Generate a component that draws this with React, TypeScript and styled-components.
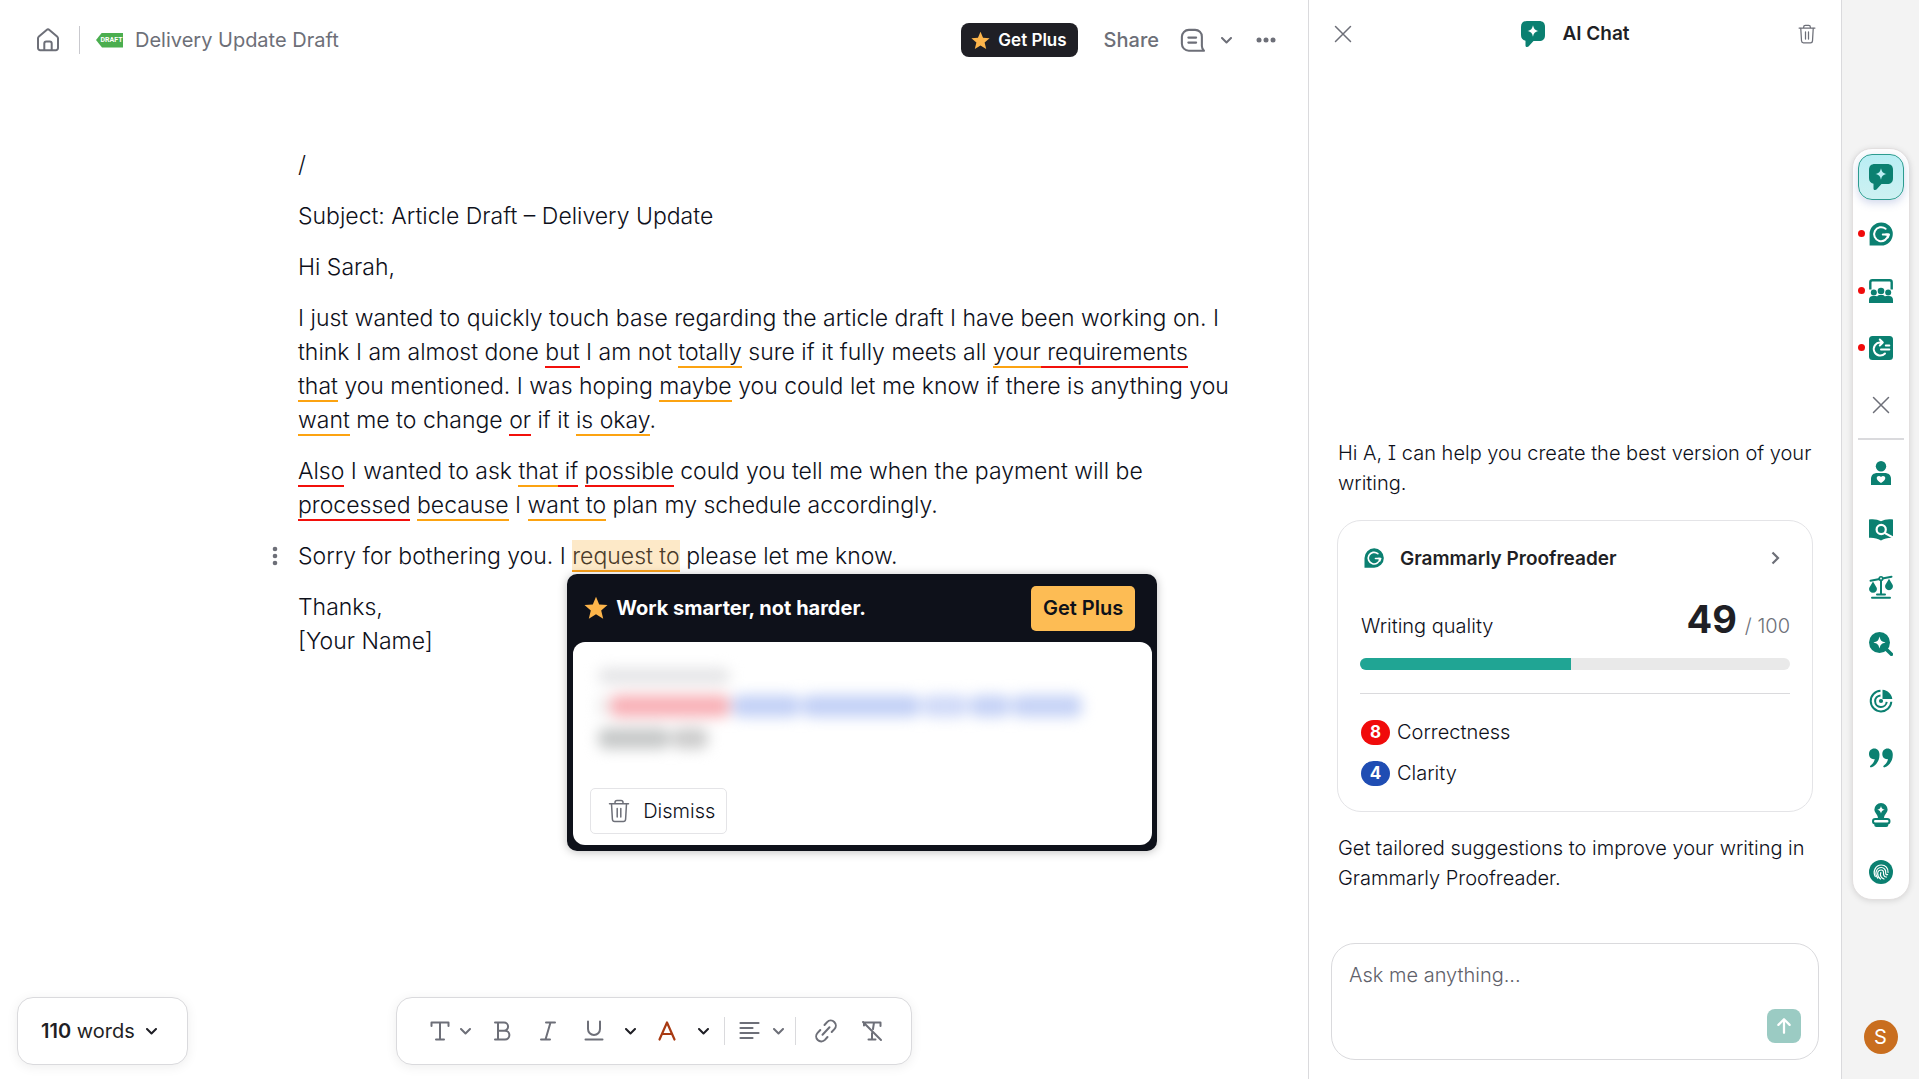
import React from "react";
import styled, { createGlobalStyle, css } from "styled-components";

const teal = "#0b8071";
const ink = "#1f1f25";
const textInk = "#0e101a";
const muted = "#6d6f78";
const line = "#dadadd";

const GlobalStyle = createGlobalStyle`
  *, *::before, *::after { box-sizing: border-box; }
  body { margin: 0; background: #fff; }
  body, button, textarea, input { font-family: Inter, "Liberation Sans", sans-serif; }
  button { border: 0; padding: 0; background: none; color: inherit; cursor: pointer; }
  svg { display: block; flex: none; }
`;

const Layout = styled.div`
  display: grid;
  grid-template-columns: minmax(0, 1fr) 534px 77px;
  height: 100vh;
  color: ${ink};
`;

/* ---------- Editor ---------- */

const Editor = styled.main`
  display: flex;
  flex-direction: column;
  min-width: 0;
`;

const TopBar = styled.header`
  display: flex;
  align-items: center;
  justify-content: space-between;
  height: 80px;
  padding: 0 22px 0 36px;
  color: ${muted};
`;

const BarGroup = styled.div`
  display: flex;
  align-items: center;
`;

const HomeLink = styled.a`
  color: ${muted};
`;

const BarRule = styled.span`
  width: 1px;
  height: 28px;
  margin: 0 16px 0 19px;
  background: #c9c9ce;
`;

const DraftTag = styled.span`
  width: 27px;
  height: 15px;
  padding-left: 4px;
  margin-right: 12px;
  background: #4bae4f;
  clip-path: polygon(0 50%, 6px 0, 100% 0, 100% 100%, 6px 100%);
  color: #fff;
  font: 700 7px/15px Roboto, sans-serif;
  text-align: center;
`;

const DocTitle = styled.h1`
  margin: 0;
  font-size: 20px;
  line-height: 28px;
  font-weight: 400;
`;

const PlusButton = styled.button`
  display: flex;
  align-items: center;
  gap: 8px;
  height: 34px;
  padding: 0 11px 0 10px;
  margin-right: 26px;
  border-radius: 8px;
  background: ${ink};
  color: #fff;
  font-size: 17px;
  font-weight: 600;
`;

const ShareButton = styled.button`
  margin-right: 19px;
  font-size: 20px;
  font-weight: 500;
`;

const PlainButton = styled.button<{ $w: number }>`
  display: flex;
  align-items: center;
  justify-content: center;
  width: ${(p) => p.$w}px;
  height: 32px;
`;

const Doc = styled.article`
  display: flex;
  flex: 1;
  flex-direction: column;
  gap: 17px;
  padding: 68px 76px 0 266px;
  color: ${textInk};
  font-size: 23px;
  line-height: 34px;
  font-weight: 300;
`;

const Block = styled.div`
  display: grid;
  grid-template-columns: 32px minmax(0, 1fr);
`;

const Para = styled.div`
  grid-column: 2;
`;

const Handle = styled.button`
  display: flex;
  align-items: center;
  justify-content: center;
  width: 18px;
  height: 34px;
  color: ${muted};
`;

const Mark = styled.span<{ $tone: "red" | "orange" }>`
  border-bottom: 2px solid ${(p) => (p.$tone === "red" ? "#f2100b" : "#fca311")};
`;

const ActiveMark = styled.span`
  position: relative;
  padding-top: 2px;
  border-bottom: 2px solid #f9a01b;
  background: #fde9c8;
  color: #4a3b2a;
`;

/* ---------- Suggestion popup ---------- */

const Popup = styled.section`
  position: absolute;
  top: calc(100% + 4px);
  left: -5px;
  z-index: 2;
  width: 590px;
  padding: 0 5px 6px 6px;
  border-radius: 10px;
  background: #0e111a;
  box-shadow: 0 1px 10px rgba(0, 0, 0, 0.25);
  color: #fff;
`;

const PopupHead = styled.div`
  display: flex;
  align-items: center;
  gap: 8px;
  height: 68px;
  padding: 0 17px 0 11px;
`;

const PopupTitle = styled.h2`
  flex: 1;
  margin: 0;
  font-size: 20px;
  line-height: 28px;
  font-weight: 700;
`;

const UpgradeButton = styled.button`
  height: 45px;
  padding: 0 12px;
  border-radius: 5px;
  background: #fdbc54;
  color: #0e111a;
  font-size: 20px;
  font-weight: 600;
`;

const PopupBody = styled.div`
  display: flex;
  flex-direction: column;
  align-items: flex-start;
  justify-content: space-between;
  height: 203px;
  padding: 22px 17px 11px;
  border-radius: 12px;
  background: #fff;
`;

const Veil = styled.div`
  display: flex;
  flex-direction: column;
  gap: 11px;
  padding: 4px 8px;
  filter: blur(7px);
`;

const VeilRow = styled.div<{ $h: number }>`
  display: flex;
  align-items: center;
  gap: 2px;
  height: ${(p) => p.$h}px;
`;

const Smudge = styled.span<{ $w: number; $c: string }>`
  width: ${(p) => p.$w}px;
  height: 100%;
  border-radius: 8px;
  background: ${(p) => p.$c};
`;

const DismissButton = styled.button`
  display: flex;
  align-items: center;
  gap: 12px;
  height: 46px;
  padding: 0 11px 0 16px;
  border: 1px solid #e4e4e7;
  border-radius: 5px;
  color: ${textInk};
  font-size: 20px;
  font-weight: 300;
  svg { color: ${muted}; }
`;

/* ---------- Bottom bars ---------- */

const BottomBar = styled.footer`
  display: grid;
  grid-template-columns: 1fr auto 1fr;
  padding: 0 17px 14px;
`;

const floating = css`
  height: 68px;
  border: 1px solid ${line};
  border-radius: 16px;
  background: #fff;
  box-shadow: 0 2px 12px rgba(0, 0, 0, 0.07);
`;

const WordCount = styled.button`
  ${floating}
  display: flex;
  align-items: center;
  justify-self: start;
  gap: 11px;
  padding: 0 30px 0 23px;
  font-size: 20px;
  font-weight: 400;
  b { font-weight: 600; }
`;

const Toolbar = styled.div`
  ${floating}
  display: flex;
  align-items: center;
  padding: 0 16px 0 31px;
  color: ${muted};
`;

const ToolRule = styled.span`
  width: 1px;
  height: 28px;
  margin: 0 7px;
  background: ${line};
`;

const Tint = styled.span<{ $c: string }>`
  display: flex;
  color: ${(p) => p.$c};
`;

/* ---------- Chat panel ---------- */

const Panel = styled.aside`
  display: flex;
  flex-direction: column;
  border: solid ${line};
  border-width: 0 1px;
`;

const PanelHead = styled.header`
  display: flex;
  align-items: center;
  justify-content: space-between;
  height: 68px;
  padding: 0 18px;
  color: ${muted};
`;

const PanelTitle = styled.h2`
  display: flex;
  align-items: center;
  gap: 16px;
  margin: 0;
  color: ${ink};
  font-size: 19px;
  line-height: 28px;
  font-weight: 600;
`;

const Thread = styled.div`
  display: flex;
  flex: 1;
  flex-direction: column;
  justify-content: flex-end;
  padding: 0 28px 50px;
  color: ${textInk};
`;

const Message = styled.p`
  margin: 0;
  padding: 0 1px;
  font-size: 20px;
  line-height: 30px;
  font-weight: 300;
`;

const SerifI = styled.span`
  font-feature-settings: "cv08" 1;
`;

const Card = styled.section`
  margin: 22px 0 21px;
  padding: 22px 22px 25px;
  border: 1px solid #e4e4e7;
  border-radius: 24px;
`;

const CardLink = styled.a`
  display: flex;
  align-items: center;
  gap: 16px;
  height: 30px;
  padding: 0 10px 0 4px;
  color: ${ink};
  font-size: 19px;
  font-weight: 600;
  text-decoration: none;
  span { flex: 1; }
`;

const QualityRow = styled.div`
  display: flex;
  align-items: baseline;
  justify-content: space-between;
  height: 85px;
  padding: 20px 0 0 1px;
  font-size: 20px;
  line-height: 52px;
  font-weight: 300;
`;

const Score = styled.span`
  color: ${muted};
  b {
    margin-right: 8px;
    color: ${ink};
    font-size: 38px;
    font-weight: 700;
  }
`;

const Track = styled.div`
  height: 12px;
  overflow: hidden;
  border-radius: 6px;
  background: #e9e9e9;
`;

const Fill = styled.div`
  height: 100%;
  background: #20a594;
`;

const CardRule = styled.hr`
  height: 1px;
  margin: 23px 0 25px;
  border: 0;
  background: ${line};
`;

const Counts = styled.ul`
  display: flex;
  flex-direction: column;
  gap: 15px;
  margin: 0;
  padding: 0 1px;
  list-style: none;
`;

const CountItem = styled.li`
  display: flex;
  align-items: center;
  gap: 7px;
  height: 26px;
  font-size: 20px;
  font-weight: 300;
`;

const Pill = styled.span<{ $c: string }>`
  width: 29px;
  height: 25px;
  border-radius: 13px;
  background: ${(p) => p.$c};
  color: #fff;
  font-size: 17px;
  line-height: 25px;
  font-weight: 700;
  text-align: center;
`;

const Composer = styled.form`
  display: flex;
  align-items: flex-end;
  height: 117px;
  margin: 0 22px 19px;
  padding: 16px 17px;
  border: 1px solid ${line};
  border-radius: 24px;
`;

const Prompt = styled.textarea`
  flex: 1;
  align-self: stretch;
  padding: 0;
  border: 0;
  outline: 0;
  resize: none;
  background: none;
  color: ${textInk};
  font-size: 20px;
  line-height: 30px;
  font-weight: 300;
  &::placeholder { color: #5f616a; opacity: 1; }
`;

const SendButton = styled.button`
  display: flex;
  align-items: center;
  justify-content: center;
  width: 34px;
  height: 34px;
  border-radius: 8px;
  background: #9bcbc3;
  color: #fff;
`;

/* ---------- Agent rail ---------- */

const Rail = styled.nav`
  display: flex;
  flex-direction: column;
  align-items: center;
  justify-content: space-between;
  padding: 148px 0 25px;
  background: #f3f3f3;
`;

const RailCard = styled.div`
  display: flex;
  flex-direction: column;
  align-items: center;
  gap: 10px;
  width: 58px;
  padding: 5px 0 4px;
  border: 1px solid #e3e0e0;
  border-radius: 20px;
  background: #fff;
  box-shadow: 0 1px 6px rgba(0, 0, 0, 0.12);
`;

const RailGroup = styled.div`
  display: flex;
  flex-direction: column;
  gap: 11px;
`;

const RailButton = styled.button<{ $active?: boolean; $gray?: boolean }>`
  position: relative;
  display: flex;
  align-items: center;
  justify-content: center;
  width: 46px;
  height: 46px;
  border-radius: 14px;
  color: ${(p) => (p.$gray ? muted : teal)};
  ${(p) =>
    p.$active &&
    css`
      border: 1px solid #2c9c90;
      background: linear-gradient(#b9eef4, #cdf1f2);
      box-shadow: 0 3px 8px rgba(70, 100, 180, 0.25);
    `}
`;

const Dot = styled.i`
  position: absolute;
  top: 19px;
  left: 0;
  width: 7px;
  height: 7px;
  border-radius: 50%;
  background: #f00b0b;
`;

const RailRule = styled.span`
  width: 46px;
  height: 2px;
  background: ${line};
`;

const Avatar = styled.button`
  width: 34px;
  height: 34px;
  border-radius: 50%;
  background: #c96e1f;
  color: #fff;
  font-size: 20px;
  line-height: 34px;
`;

/* ---------- Icons ---------- */

type IconProps = { size?: number; w?: number; children: React.ReactNode };

const Stroke = ({ size = 24, w = 2, children }: IconProps) => (
  <svg width={size} height={size} viewBox="0 0 24 24" fill="none" stroke="currentColor"
    strokeWidth={w} strokeLinecap="round" strokeLinejoin="round" aria-hidden="true">
    {children}
  </svg>
);

const Solid = ({ size = 24, children }: IconProps) => (
  <svg width={size} height={size} viewBox="0 0 24 24" fill="currentColor" aria-hidden="true">
    {children}
  </svg>
);

const Chevron = () => (
  <svg width="11" height="7" viewBox="0 0 11 7" fill="none" stroke="currentColor" strokeWidth="2" aria-hidden="true">
    <path d="M1 1l4.500 4.500L10 1" strokeLinecap="round" strokeLinejoin="round" />
  </svg>
);

const Star = ({ size }: { size: number }) => (
  <svg width={size} height={size} viewBox="0 0 24 24" fill="#fdb54b" aria-hidden="true">
    <path d="M12 .8l3.200 7.700 8.300.6-6.300 5.400 2 8.200L12 18.300l-7.200 4.400 2-8.200L.5 9.100l8.300-.6z" />
  </svg>
);

const HomeIcon = () => (
  <Stroke size={24}>
    <path d="M2 10.300 C2 9.500 2.300 8.900 2.900 8.400 L10.600 1.900 a2.200 2.200 0 0 1 2.800 0 L21.100 8.400 C21.700 8.900 22 9.500 22 10.300 V20 a2.200 2.200 0 0 1-2.200 2.200 H4.200 A2.200 2.200 0 0 1 2 20z" />
    <path d="M8.300 22v-6.500a2 2 0 0 1 2-2h3.400a2 2 0 0 1 2 2V22" />
  </Stroke>
);

const CommentIcon = () => (
  <Stroke size={25}>
    <path d="M8.500 1.800h6a6.500 6.500 0 0 1 6.500 6.500v9c0 2 .5 3 2 4.500H8.500A6.700 6.700 0 0 1 1.800 15V8.500A6.700 6.700 0 0 1 8.500 1.800z" />
    <path d="M8 9.200h7.500M8 14h7.500" />
  </Stroke>
);

const TrashIcon = ({ size }: { size: number }) => (
  <Stroke size={size} w={1.500}>
    <path d="M2.500 4.800h19M8 4.800V3.500C8 2.400 8.800 1.500 10 1.500h4c1.200 0 2 .9 2 2v1.300M4.500 4.800l.9 15.400c.1 1.400 1 2.300 2.300 2.300h8.600c1.300 0 2.200-.9 2.300-2.300l.9-15.400M10.200 9.500v8.500M13.800 9.500v8.500" />
  </Stroke>
);

const CloseIcon = () => (
  <Stroke size={18} w={2}>
    <path d="M2 2l20 20M22 2L2 22" />
  </Stroke>
);

const ChatIcon = ({ spark = "#fff" }: { spark?: string }) => (
  <svg width="26" height="26" viewBox="0 0 26 26" fill={teal} aria-hidden="true">
    <path d="M7 0h12c4 0 6 2 6 6v8c0 4-2 6-6 6h-5.500L8.500 25.400c-1 .9-3 .6-3-1V19.700C2.500 19.200 1 17.200 1 14V6c0-4 2-6 6-6z" />
    <path fill={spark} d="M13 4.200c.9 3.800 1.900 4.800 5.600 5.800-3.700.9-4.700 1.900-5.600 5.700-.9-3.800-1.900-4.800-5.600-5.700 3.700-1 4.700-2 5.600-5.800z" />
  </svg>
);

const ProofIcon = ({ size = 24 }: { size?: number }) => (
  <Solid size={size}>
    <path fill={teal} d="M12.200.4a11.600 11.600 0 1 1 0 23.200H.6V12A11.600 11.600 0 0 1 12.200.4z" />
    <g fill="none" stroke="#fff" strokeWidth="2" strokeLinecap="round" strokeLinejoin="round">
      <path d="M16.600 6.800a7 7 0 1 0 2.500 5.800h-5.300" />
      <path d="M17 12.600h3l-1.200 2.800" />
    </g>
  </Solid>
);

const AudienceIcon = () => (
  <Solid>
    <path d="M1.300 10.500V3.200C1.300 1.800 2 1.200 3.300 1.200h17.400c1.300 0 2 .6 2 2v7.300" fill="none" stroke="currentColor" strokeWidth="2.400" />
    <circle cx="4.800" cy="13.500" r="3" />
    <circle cx="19.200" cy="13.500" r="3" />
    <circle cx="12" cy="12" r="3.300" />
    <path d="M0 24v-3c0-2.500 1.500-4 3.800-4h2.700c.6 0 1.100.2 1.500.4.900-.9 2-1.400 3.200-1.400h1.600c1.200 0 2.300.5 3.200 1.400.4-.2.900-.4 1.500-.4h2.700c2.300 0 3.800 1.500 3.800 4v3z" />
  </Solid>
);

const ParaphraseIcon = () => (
  <Solid>
    <rect width="24" height="24" rx="3.500" />
    <g fill="none" stroke="#fff" strokeWidth="2" strokeLinecap="round" strokeLinejoin="round">
      <path d="M13.500 6.500h-2.200a6.500 6.500 0 1 0 4.700 11M10.800 3.500l3 3-3 3" />
      <path d="M16.800 9.500h3.500M12 13.500h8.300" />
    </g>
  </Solid>
);

const PersonIcon = () => (
  <Solid>
    <circle cx="12" cy="5.200" r="5.200" />
    <path d="M2 24v-6c0-4 2.500-6 6.500-6h7c4 0 6.500 2 6.500 6v6z" />
    <path fill="#fff" d="M12 22c-2.700-1.700-4.300-3-4.300-4.900 0-2.400 3-3 4.300-1.100 1.300-1.900 4.300-1.300 4.300 1.100 0 1.900-1.600 3.200-4.300 4.900z" />
  </Solid>
);

const BookIcon = () => (
  <Solid>
    <path d="M0 1.500c4.500-.7 8.500-.2 12 1.800 3.500-2 7.500-2.500 12-1.800v18.300c-4.500-.3-8 .4-12 2.700-4-2.300-7.500-3-12-2.700z" />
    <g fill="none" stroke="#fff" strokeWidth="2.200">
      <circle cx="12.200" cy="11.500" r="4.600" />
      <path d="M15.500 14.900l9 5" />
    </g>
  </Solid>
);

const ScalesIcon = () => (
  <Solid>
    <g fill="none" stroke="currentColor" strokeWidth="2" strokeLinecap="round">
      <path d="M1.500 5.800l21-4M12 5v14M8 19.500h8M3 22.800h18" />
    </g>
    <circle cx="12" cy="3.500" r="2.600" />
    <path d="M4 6.500l3.700 6.200a3.900 3.900 0 1 1-7.400 0zM20 3.800l3.700 6.200a3.900 3.900 0 1 1-7.400 0z" />
    <circle cx="12" cy="3.500" r=".9" fill="#fff" />
  </Solid>
);

const SearchSparkIcon = () => (
  <Solid>
    <circle cx="10.500" cy="10.500" r="10.500" />
    <path d="M17 17l5.400 5.300" stroke="currentColor" strokeWidth="3.600" strokeLinecap="round" />
    <path fill="#fff" d="M10.500 4.500c1 4 2 5 6 6-4 1-5 2-6 6-1-4-2-5-6-6 4-1 5-2 6-6z" />
  </Solid>
);

const TargetIcon = () => (
  <Solid>
    <g fill="none" stroke="currentColor" strokeWidth="2">
      <path d="M11.500 1.800a10.300 10.300 0 1 0 10.800 11" />
      <path d="M11.500 6.400a5.800 5.800 0 1 0 6.200 6.400" />
    </g>
    <circle cx="12" cy="12" r="2.100" />
    <path d="M13.500 9.900V.8c5.300.6 9 4.200 9.800 9.100h-5.500z" />
  </Solid>
);

const QuoteIcon = () => (
  <Solid>
    <path d="M5.200 2.500c3.300 0 5.300 2.400 5.300 6.200 0 6-3.300 10.700-8 12.600-1.600.5-2.100-1-.9-1.900 2.600-1.900 3.900-4 4-6.300C2.300 13.500 0 11.200 0 8c0-3.200 2.200-5.500 5.200-5.500zM18.500 2.500c3.300 0 5.300 2.400 5.300 6.200 0 6-3.300 10.700-8 12.600-1.600.5-2.100-1-.9-1.900 2.600-1.900 3.900-4 4-6.300-3.300.4-5.600-1.900-5.600-5.100 0-3.200 2.200-5.500 5.200-5.500z" />
  </Solid>
);

const StampIcon = () => (
  <Solid>
    <path d="M12 0a6.600 6.600 0 0 1 6.600 6.600c0 3.300-3.600 5-3.600 9H9c0-4-3.600-5.700-3.600-9A6.600 6.600 0 0 1 12 0z" />
    <path fill="#fff" d="M12 3c.6 2.500 1.200 3.100 3.700 3.700-2.500.6-3.100 1.200-3.700 3.700-.6-2.500-1.200-3.100-3.700-3.700C10.800 6.100 11.400 5.500 12 3z" />
    <rect x="4" y="15.900" width="16.500" height="4.600" rx="2.300" fill="none" stroke="currentColor" strokeWidth="2" />
    <path d="M5.300 20h14v1.800c0 1.400-.8 2.200-2.200 2.200H7.500c-1.400 0-2.200-.8-2.200-2.200z" />
  </Solid>
);

const FingerprintIcon = () => (
  <Solid>
    <circle cx="12" cy="12" r="12" />
    <g fill="none" stroke="#fff" strokeWidth="1.200" strokeLinecap="round">
      <path d="M6.300 16.500c-2.800-5 .3-11.500 6-11.500 4.300 0 7 3.300 6.700 7.400" />
      <path d="M8.700 18c-3.700-4.600-1-10.500 3.500-10.500 3 0 4.800 2.400 4.500 5.200-.2 1.900 1 2.500 1.900 1.900" />
      <path d="M11.500 19c-4.300-3.400-3.400-9 .7-9 1.700 0 2.500 1.300 2.300 3-.2 2.800 1.300 4.200 3 4" />
      <path d="M15 19c-3-1-4.200-3.700-3.200-6.500" />
    </g>
  </Solid>
);

const icons = {
  type: <Stroke w={2}><path d="M3.500 7V3.500h17V7M12 3.500v17M8 20.500h8" /></Stroke>,
  bold: <Stroke w={2}><path d="M5 3.500h9a4 4 0 0 1 0 8.200H8M8 11.700h7a4.400 4.400 0 0 1 0 8.800H5M8 3.500v17" /></Stroke>,
  italic: <Stroke w={2}><path d="M10 3.500h9M5 20.500h9M14.500 3.500l-5 17" /></Stroke>,
  underline: <Stroke w={2}><path d="M6 2.500v7.500a6 6 0 0 0 12 0V2.500M3.500 20.500h17" /></Stroke>,
  color: <Stroke w={2.200}><path d="M4.500 20.500L12 3.500l7.500 17M7 15h10" /></Stroke>,
  align: <Stroke w={2.200}><path d="M2.500 4h18M2.500 9h12M2.500 14h18M2.500 19h12" /></Stroke>,
  link: <Stroke w={2}><path d="M10.500 6l2.600-2.900a5 5 0 0 1 7.300 7l-2.700 2.900M13.500 18l-2.600 2.900a5 5 0 0 1-7.300-7L6.300 11M8.500 15.800l7-7.600" /></Stroke>,
  clear: <Stroke w={2}><path d="M4 6.500V3.500h16.500V7M14 3.500l-1 6.500M12 14v6.500M8.500 20.500h7M3 3l18 18" /></Stroke>,
};

const Tool = ({ label, w = 46, children }: { label: string; w?: number; children: React.ReactNode }) => (
  <PlainButton type="button" $w={w} aria-label={label}>{children}</PlainButton>
);

const railTop = [
  { label: "Proofreader", icon: <ProofIcon /> },
  { label: "Reader Reactions", icon: <AudienceIcon /> },
  { label: "Paraphraser", icon: <ParaphraseIcon /> },
];

const railBottom = [
  { label: "Humanizer", icon: <PersonIcon /> },
  { label: "Expert Review", icon: <BookIcon /> },
  { label: "Fact Checker", icon: <ScalesIcon /> },
  { label: "AI Detector", icon: <SearchSparkIcon /> },
  { label: "Grader", icon: <TargetIcon /> },
  { label: "Citation Finder", icon: <QuoteIcon /> },
  { label: "Authorship", icon: <StampIcon /> },
  { label: "Plagiarism Checker", icon: <FingerprintIcon /> },
];

const score = 49;

const SuggestionPopup = () => (
  <Popup>
    <PopupHead>
      <Star size={24} />
      <PopupTitle>Work smarter, not harder.</PopupTitle>
      <UpgradeButton type="button">Get Plus</UpgradeButton>
    </PopupHead>
    <PopupBody>
      <Veil aria-hidden="true">
        <VeilRow $h={16}><Smudge $w={132} $c="#e4e4e6" /></VeilRow>
        <VeilRow $h={22}>
          <Smudge $w={10} $c="#ececec" />
          <Smudge $w={120} $c="#f8b0b6" />
          <Smudge $w={68} $c="#c2d0f6" />
          <Smudge $w={118} $c="#c2d0f6" />
          <Smudge $w={46} $c="#d0daf8" />
          <Smudge $w={40} $c="#c5d2f6" />
          <Smudge $w={70} $c="#c5d2f6" />
        </VeilRow>
        <VeilRow $h={21}>
          <Smudge $w={72} $c="#c6c8c8" />
          <Smudge $w={36} $c="#cccccc" />
        </VeilRow>
      </Veil>
      <DismissButton type="button">
        <TrashIcon size={24} />
        Dismiss
      </DismissButton>
    </PopupBody>
  </Popup>
);

export default function App() {
  return (
    <Layout>
      <GlobalStyle />
      <Editor>
        <TopBar>
          <BarGroup>
            <HomeLink href="#home" aria-label="Home"><HomeIcon /></HomeLink>
            <BarRule />
            <DraftTag>DRAFT</DraftTag>
            <DocTitle>Delivery Update Draft</DocTitle>
          </BarGroup>
          <BarGroup>
            <PlusButton type="button"><Star size={19} />Get Plus</PlusButton>
            <ShareButton type="button">Share</ShareButton>
            <PlainButton type="button" $w={28} aria-label="Comments"><CommentIcon /></PlainButton>
            <PlainButton type="button" $w={40} aria-label="Comment options"><Chevron /></PlainButton>
            <PlainButton type="button" $w={40} aria-label="More">
              <svg width="20" height="6" viewBox="0 0 20 6" fill="currentColor" aria-hidden="true">
                <circle cx="3" cy="3" r="2.500" /><circle cx="10" cy="3" r="2.500" /><circle cx="17" cy="3" r="2.500" />
              </svg>
            </PlainButton>
          </BarGroup>
        </TopBar>

        <Doc>
          <Block><Para>/</Para></Block>
          <Block><Para>Subject: Article Draft – Delivery Update</Para></Block>
          <Block><Para>Hi Sarah,</Para></Block>
          <Block>
            <Para>
              I just wanted to quickly touch base regarding the article draft I have been working on. I think I am
              almost done <Mark $tone="red">but</Mark> I am not <Mark $tone="orange">totally</Mark> sure if it fully
              meets all <Mark $tone="orange">your</Mark><Mark $tone="red"> requirements</Mark>{" "}
              <Mark $tone="orange">that</Mark> you mentioned. I was hoping <Mark $tone="orange">maybe</Mark> you could
              let me know if there is anything you <Mark $tone="orange">want</Mark> me to change{" "}
              <Mark $tone="red">or</Mark> if it <Mark $tone="orange">is okay</Mark>.
            </Para>
          </Block>
          <Block>
            <Para>
              <Mark $tone="red">Also</Mark> I wanted to ask <Mark $tone="orange">that</Mark><Mark $tone="red"> if</Mark>{" "}
              <Mark $tone="red">possible</Mark> could you tell me when the payment will be{" "}
              <Mark $tone="red">processed</Mark> <Mark $tone="orange">because</Mark> I{" "}
              <Mark $tone="orange">want to</Mark> plan my schedule accordingly.
            </Para>
          </Block>
          <Block>
            <Handle type="button" aria-label="Block options">
              <svg width="6" height="20" viewBox="0 0 6 20" fill="currentColor" aria-hidden="true">
                <circle cx="3" cy="3" r="2.300" /><circle cx="3" cy="10" r="2.300" /><circle cx="3" cy="17" r="2.300" />
              </svg>
            </Handle>
            <Para>
              Sorry for bothering you. I <ActiveMark>request to<SuggestionPopup /></ActiveMark> please let me know.
            </Para>
          </Block>
          <Block><Para>Thanks,<br />[Your Name]</Para></Block>
        </Doc>

        <BottomBar>
          <WordCount type="button"><span><b>110</b> words</span><Chevron /></WordCount>
          <Toolbar role="toolbar" aria-label="Formatting">
            <Tool label="Text style" w={24}>{icons.type}</Tool>
            <Tool label="Text style options" w={27}><Chevron /></Tool>
            <Tool label="Bold">{icons.bold}</Tool>
            <Tool label="Italic">{icons.italic}</Tool>
            <Tool label="Underline">{icons.underline}</Tool>
            <Tint $c={ink}><Tool label="Underline options" w={27}><Chevron /></Tool></Tint>
            <Tint $c="#a83a12"><Tool label="Text color">{icons.color}</Tool></Tint>
            <Tint $c={ink}><Tool label="Text color options" w={27}><Chevron /></Tool></Tint>
            <ToolRule />
            <Tool label="Align" w={36}>{icons.align}</Tool>
            <Tool label="Align options" w={20}><Chevron /></Tool>
            <ToolRule />
            <Tool label="Link">{icons.link}</Tool>
            <Tool label="Clear formatting">{icons.clear}</Tool>
          </Toolbar>
        </BottomBar>
      </Editor>

      <Panel>
        <PanelHead>
          <PlainButton type="button" $w={32} aria-label="Close chat"><CloseIcon /></PlainButton>
          <PanelTitle><ChatIcon />AI Chat</PanelTitle>
          <PlainButton type="button" $w={32} aria-label="Clear chat"><TrashIcon size={20} /></PlainButton>
        </PanelHead>
        <Thread>
          <Message>
            Hi A, <SerifI>I</SerifI> can help you create the best version of your writing.
          </Message>
          <Card>
            <CardLink href="#proofreader">
              <ProofIcon size={20} />
              <span>Grammarly Proofreader</span>
              <svg width="9" height="14" viewBox="0 0 9 14" fill="none" stroke={muted} strokeWidth="2.200" aria-hidden="true">
                <path d="M1.500 1.500L7 7l-5.500 5.500" />
              </svg>
            </CardLink>
            <QualityRow>
              <span>Writing quality</span>
              <Score><b>{score}</b>/ 100</Score>
            </QualityRow>
            <Track><Fill style={{ width: `${score}%` }} /></Track>
            <CardRule />
            <Counts>
              <CountItem><Pill $c="#f00b0b">8</Pill>Correctness</CountItem>
              <CountItem><Pill $c="#1f4db3">4</Pill>Clarity</CountItem>
            </Counts>
          </Card>
          <Message>Get tailored suggestions to improve your writing in Grammarly Proofreader.</Message>
        </Thread>
        <Composer>
          <Prompt aria-label="Message" placeholder="Ask me anything..." />
          <SendButton type="button" aria-label="Send">
            <Stroke size={18} w={3}><path d="M12 21V3M4.500 10.500L12 3l7.500 7.500" /></Stroke>
          </SendButton>
        </Composer>
      </Panel>

      <Rail aria-label="Agents">
        <RailCard>
          <RailGroup>
            <RailButton type="button" $active aria-label="AI Chat"><ChatIcon spark="#bdeff4" /></RailButton>
            {railTop.map((a) => (
              <RailButton type="button" key={a.label} aria-label={a.label}><Dot />{a.icon}</RailButton>
            ))}
            <RailButton type="button" $gray aria-label="Close"><CloseIcon /></RailButton>
          </RailGroup>
          <RailRule />
          <RailGroup>
            {railBottom.map((a) => (
              <RailButton type="button" key={a.label} aria-label={a.label}>{a.icon}</RailButton>
            ))}
          </RailGroup>
        </RailCard>
        <Avatar type="button">S</Avatar>
      </Rail>
    </Layout>
  );
}
